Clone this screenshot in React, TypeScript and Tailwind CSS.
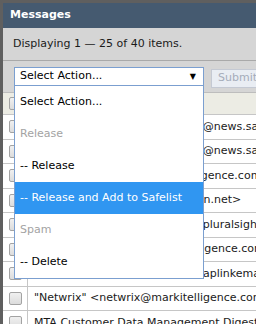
import React from 'react';

const rows = [
  '"SANS NewsBites" <newsbites@news.sans.org>',
  '"SANS NewsBites" <newsbites@news.sans.org>',
  '"Varonis" <promos@markitelligence.com>',
  '"Toad World" <toadw@quest-on.net>',
  '"Pluralsight" <news-updates@pluralsight.com>',
  '"Idera" <ideranews@markitelligence.com>',
  '"MapLink" <mapcampaign@maplinkemail.com>',
  '"Netwrix" <netwrix@markitelligence.com>',
  'MTA Customer Data Management Digest',
];

const options = [
  { label: 'Select Action...', kind: 'item' },
  { label: 'Release', kind: 'group' },
  { label: '-- Release', kind: 'item' },
  { label: '-- Release and Add to Safelist', kind: 'active' },
  { label: 'Spam', kind: 'group' },
  { label: '-- Delete', kind: 'item' },
];

function Checkbox() {
  return (
    <div className="w-[13px] h-[13px] rounded-[2px] border border-[#a3a3a3] bg-gradient-to-b from-[#f0f0f0] to-[#dcdcdc]" />
  );
}

export default function App() {
  return (
    <div className="w-[256px] h-[324px] overflow-hidden bg-white border-t-[3px] border-l-[3px] border-[#5f5f5f] font-['DejaVu_Sans',sans-serif] text-[11px] text-[#1a1a1a]">
      {/* Title bar */}
      <div className="h-[25px] bg-[#455a70] flex items-center pl-[7px]">
        <span className="text-white font-bold text-[11px]">Messages</span>
      </div>

      {/* Paging info */}
      <div className="h-[33px] bg-[#d5d5d5] flex items-center pl-[10px] border-b border-[#a9a9a9]">
        Displaying 1 — 25 of 40 items.
      </div>

      {/* Toolbar */}
      <div className="h-[31px] bg-[#d5d5d5] relative flex items-start pt-[6px] pl-[11px] gap-[7px]">
        <div className="relative w-[190px] shrink-0">
          <div className="h-[19px] bg-white border border-[#7b9fd0] flex items-center justify-between pl-[5px] pr-[7px]">
            <span className="text-black">Select Action...</span>
            <span className="text-[8px] text-black">▼</span>
          </div>
          <div className="absolute left-0 top-[18px] w-[190px] bg-white border border-[#7b9fd0] z-10">
            {options.map((o) => (
              <div
                key={o.label}
                className={
                  o.kind === 'active'
                    ? 'h-[32px] flex items-center pl-[5px] bg-[#3096f1] text-white'
                    : o.kind === 'group'
                    ? 'h-[32px] flex items-center pl-[5px] text-[#a3a3a3]'
                    : 'h-[32px] flex items-center pl-[5px] text-black'
                }
              >
                {o.label}
              </div>
            ))}
          </div>
        </div>
        <div className="shrink-0 mt-[2px] h-[19px] px-[6px] flex items-center bg-[#e9edf3] border border-[#c4c9d3] text-[#a5acba] whitespace-nowrap">
          Submit
        </div>
      </div>

      {/* Table */}
      <div className="border-t border-[#bdbdbd]">
        <div className="h-[21px] bg-[#ecece4] flex">
          <div className="w-[25px] flex items-center justify-center shrink-0">
            <Checkbox />
          </div>
          <div className="flex-1" />
        </div>
        {rows.map((r, i) => (
          <div key={i} className="h-[24.5px] flex border-t border-[#c6c6c6] bg-white">
            <div className="w-[25px] shrink-0 flex items-center justify-center border-r border-[#c6c6c6]">
              <Checkbox />
            </div>
            <div className="flex-1 flex items-center pl-[6px] whitespace-nowrap overflow-hidden">{r}</div>
          </div>
        ))}
      </div>
    </div>
  );
}
